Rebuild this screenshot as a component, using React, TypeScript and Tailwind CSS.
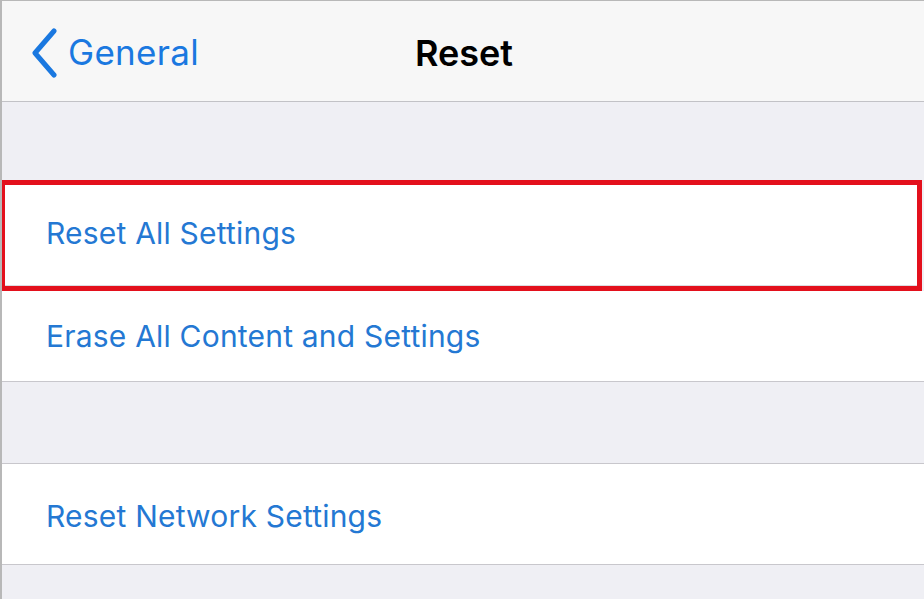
import React from "react";

const font = { fontFamily: "Inter, 'Noto Sans', sans-serif" };

export default function App() {
  return (
    <div
      className="w-[924px] h-[599px] overflow-hidden bg-[#efeff4] border-l-2 border-t border-[#b8b8b8] flex flex-col"
      style={font}
    >
      <div className="h-[101px] shrink-0 bg-[#f7f7f7] border-b border-[#c2c2c6] relative flex items-center justify-center pt-[3px]">
        <div className="absolute left-[28px] top-0 h-full flex items-center gap-[10px] pt-[3px]">
          <svg width="28" height="50" viewBox="0 0 28 50">
            <path d="M24 3 L5 25 L24 47" fill="none" stroke="#1a78e0" strokeWidth="5" strokeLinecap="round" strokeLinejoin="round" />
          </svg>
          <span className="text-[35px] text-[#1a78e0] tracking-[0.3px]">General</span>
        </div>
        <span className="text-[36px] font-semibold text-black ml-[2px]">Reset</span>
      </div>
      <div className="h-[78px] shrink-0" />
      <div className="shrink-0 border-[5px] border-solid border-[#e3101c] mr-[2px] -ml-[2px] bg-white">
        <div className="flex items-center h-[101px] pl-[41px] border-b border-[#dcdce0] pb-[4px]">
          <span className="text-[30px] text-[#2478d3] tracking-[0.2px]">Reset All Settings</span>
        </div>
      </div>
      <div className="shrink-0 bg-white border-b border-[#c8c7cc] flex items-center h-[91px] pl-[44px]">
        <span className="text-[30px] text-[#2478d3] tracking-[0.2px]">Erase All Content and Settings</span>
      </div>
      <div className="h-[81px] shrink-0" />
      <div className="shrink-0 bg-white border-y border-[#c8c7cc] flex items-center h-[102px] pl-[44px] pt-[4px]">
        <span className="text-[30px] text-[#2478d3] tracking-[0.2px]">Reset Network Settings</span>
      </div>
      <div className="flex-1" />
    </div>
  );
}
